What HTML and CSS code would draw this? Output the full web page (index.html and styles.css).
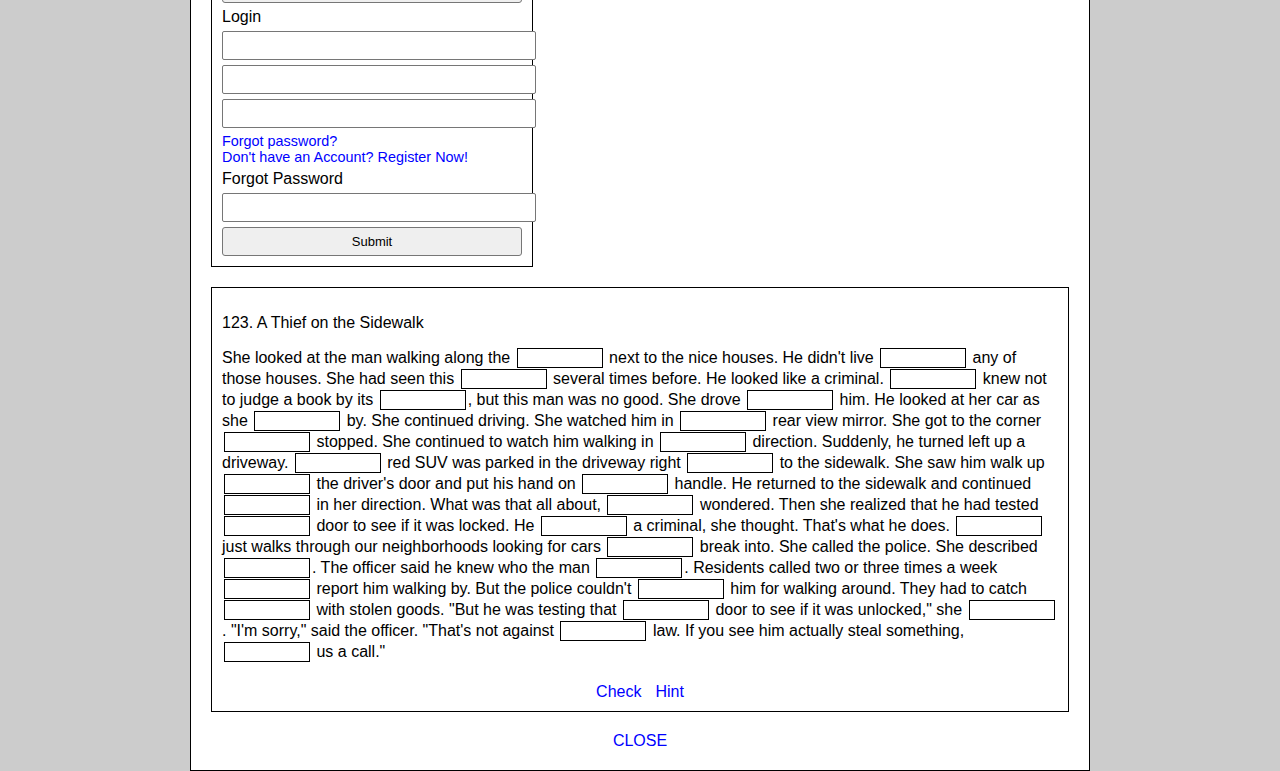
FILE: index.html
```html
<!DOCTYPE html>
<html lang="en">
<head>
<meta charset="utf-8">
<title>A Thief on the Sidewalk</title>
<link rel="stylesheet" href="styles.css">
</head>
<body>
<div class="modal">
  <div class="account">
    <div class="label">Register</div>
    <input class="field" type="text">
    <input class="field" type="text">
    <input class="field" type="password">
    <input class="field" type="password">
    <button class="btn" type="button">Submit</button>
    <div class="label">Login</div>
    <input class="field" type="text">
    <input class="field" type="password">
    <input class="field" type="text">
    <div class="links">
      <a href="#">Forgot password?</a>
      <a href="#">Don't have an Account? Register Now!</a>
    </div>
    <div class="label">Forgot Password</div>
    <input class="field" type="text">
    <button class="btn" type="button">Submit</button>
  </div>

  <div class="exercise">
    <p class="title">123. A Thief on the Sidewalk</p>
    <p class="story">She looked at the man walking along the <input class="gap"> next to the nice houses. He didn't live <input class="gap"> any of those houses. She had seen this <input class="gap"> several times before. He looked like a criminal. <input class="gap"> knew not to judge a book by its <input class="gap">, but this man was no good. She drove <input class="gap"> him. He looked at her car as she <input class="gap"> by. She continued driving. She watched him in <input class="gap"> rear view mirror. She got to the corner <input class="gap"> stopped. She continued to watch him walking in <input class="gap"> direction. Suddenly, he turned left up a driveway. <input class="gap"> red SUV was parked in the driveway right <input class="gap"> to the sidewalk. She saw him walk up <input class="gap"> the driver's door and put his hand on <input class="gap"> handle. He returned to the sidewalk and continued <input class="gap"> in her direction. What was that all about, <input class="gap"> wondered. Then she realized that he had tested <input class="gap"> door to see if it was locked. He <input class="gap"> a criminal, she thought. That's what he does. <input class="gap"> just walks through our neighborhoods looking for cars <input class="gap"> break into. She called the police. She described <input class="gap">. The officer said he knew who the man <input class="gap">. Residents called two or three times a week <input class="gap"> report him walking by. But the police couldn't <input class="gap"> him for walking around. They had to catch <input class="gap"> with stolen goods. "But he was testing that <input class="gap"> door to see if it was unlocked," she <input class="gap">. "I'm sorry," said the officer. "That's not against <input class="gap"> law. If you see him actually steal something, <input class="gap"> us a call."</p>
    <div class="actions">
      <a href="#">Check</a>
      <a href="#">Hint</a>
    </div>
  </div>

  <div class="close"><a href="#">CLOSE</a></div>
</div>
</body>
</html>
```

FILE: styles.css
```css
html, body {
  margin: 0;
  padding: 0;
  background: #cccccc;
  overflow: hidden;
}

body {
  font-family: "Liberation Sans", Arial, sans-serif;
  font-size: 16px;
  color: #000;
}

a {
  color: #0000ff;
  text-decoration: none;
}

.modal {
  box-sizing: border-box;
  width: 900px;
  margin: -217px auto 0;
  background: #fff;
  border: 1px solid #000;
  padding: 20px 20px 20px;
}

.account {
  box-sizing: border-box;
  width: 322px;
  border: 1px solid #000;
  padding: 10px;
  display: flex;
  flex-direction: column;
  align-items: flex-start;
  gap: 5px;
}

.label {
  line-height: 18px;
}

.field {
  display: block;
  box-sizing: content-box;
  width: 100%;
  height: 27px;
  padding: 0 6px;
  margin: 0;
  border: 1px solid #767676;
  border-radius: 2px;
  background: #fff;
  font: 16px "Liberation Sans", Arial, sans-serif;
}

.btn {
  box-sizing: border-box;
  width: 100%;
  height: 29px;
  margin: 0;
  padding: 0;
  border: 1px solid #767676;
  border-radius: 3px;
  background: #efefef;
  color: #000;
  font: 13px "Liberation Sans", Arial, sans-serif;
}

.links {
  display: flex;
  flex-direction: column;
  font-size: 14.4px;
  line-height: 16px;
}

.exercise {
  margin-top: 20px;
  border: 1px solid #000;
  padding: 10px;
}

.title {
  margin: 16px 0 0;
  line-height: 18px;
}

.story {
  margin: 15px 0 0;
  line-height: 21px;
}

.gap {
  box-sizing: border-box;
  width: 86px;
  height: 20px;
  margin: 1px 2px 0;
  padding: 0 2px;
  border: 1px solid #000;
  border-radius: 0;
  background: #fff;
  vertical-align: top;
  font: 14px "Liberation Sans", Arial, sans-serif;
}

.actions {
  display: flex;
  justify-content: center;
  gap: 14px;
  margin-top: 21px;
  line-height: 18px;
}

.close {
  margin-top: 20px;
  text-align: center;
  line-height: 18px;
}
```
